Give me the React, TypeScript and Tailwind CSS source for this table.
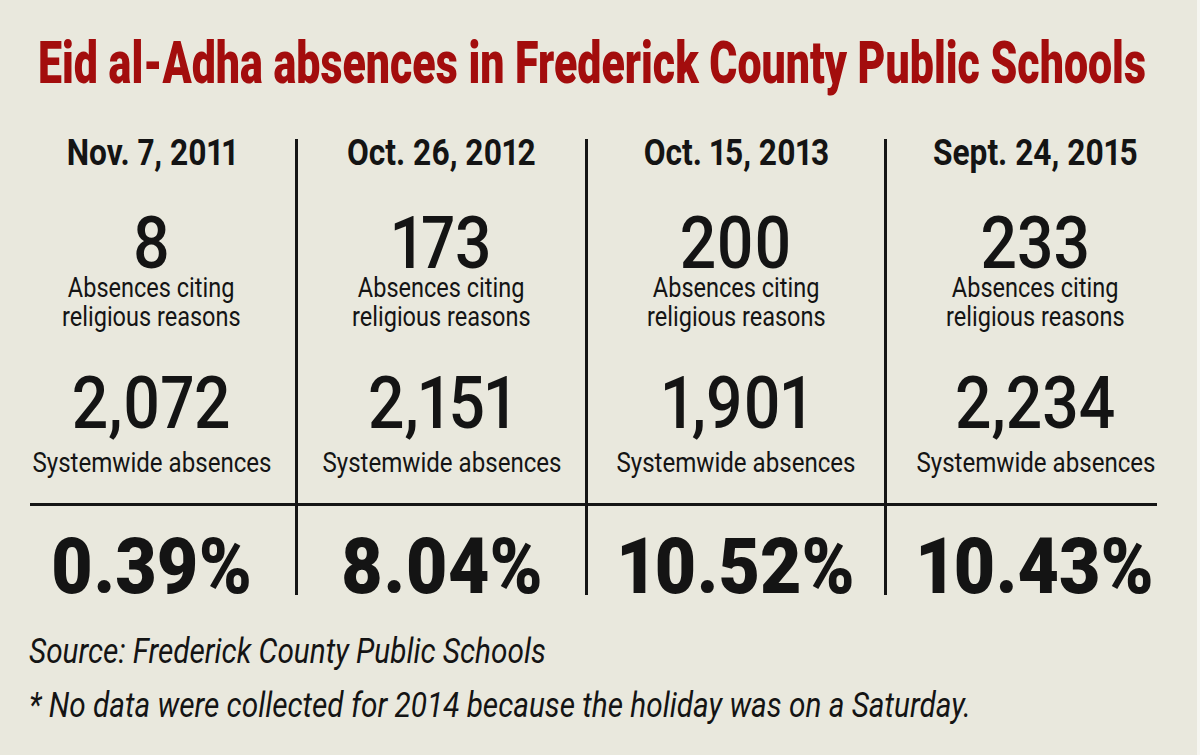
import clsx from "clsx";
import type { ReactNode } from "react";

const columns = [
  { date: "Nov. 7, 2011", religious: "8", total: "2,072", pct: "0.39%" },
  { date: "Oct. 26, 2012", religious: "173", total: "2,151", pct: "8.04%" },
  { date: "Oct. 15, 2013", religious: "200", total: "1,901", pct: "10.52%" },
  { date: "Sept. 24, 2015", religious: "233", total: "2,234", pct: "10.43%" },
];

// the reference uses a condensed face, so squeeze a regular one horizontally
function Squeeze({ className, children }: { className?: string; children: ReactNode }) {
  return <span className={clsx("inline-block whitespace-nowrap", className)}>{children}</span>;
}

export default function App() {
  return (
    <div className="w-[1200px] h-[755px] overflow-hidden bg-[#e9e8dd] text-[#141414] font-['Roboto','Liberation_Sans',sans-serif] border-r-[3px] border-r-[#f6f6f1]">
      <h1 className="pt-[33px] pl-[38px] text-[60px] leading-[60px] font-black text-[#a30d0d]">
        <Squeeze className="origin-left scale-x-[0.715]">
          Eid al-Adha absences in Frederick County Public Schools
        </Squeeze>
      </h1>

      <div className="mt-[46px] ml-[8px] grid h-[455px] grid-cols-[287px_290px_299px_300px]">
        {columns.map((col, i) => (
          <div
            key={col.date}
            className={clsx(
              "flex flex-col items-center proportional-nums",
              i > 0 && "border-l-[3px] border-l-[#151515]"
            )}
          >
            <Squeeze className="mt-[1px] text-[36px] leading-[26px] font-bold scale-x-[0.88]">
              {col.date}
            </Squeeze>
            <Squeeze className="mt-[51px] text-[73px] leading-[52px] font-medium scale-x-[0.88]">
              {col.religious}
            </Squeeze>
            <div className="mt-[4px] flex flex-col items-center text-[28px] leading-[29px]">
              <Squeeze className="scale-x-[0.84]">Absences citing</Squeeze>
              <Squeeze className="scale-x-[0.84]">religious reasons</Squeeze>
            </div>
            <Squeeze className="mt-[46px] text-[73px] leading-[52px] font-medium scale-x-[0.88]">
              {col.total}
            </Squeeze>
            <Squeeze className="mt-[19px] text-[28px] leading-[29px] scale-x-[0.86]">
              Systemwide absences
            </Squeeze>
            <div
              className={clsx(
                "mt-[26px] h-[3px] self-stretch bg-[#151515]",
                i === 0 && "ml-[22px]",
                i === 3 && "mr-[27px]"
              )}
            />
            <Squeeze className="mt-[34px] text-[77px] leading-[55px] font-black scale-x-[0.93]">
              {col.pct}
            </Squeeze>
          </div>
        ))}
      </div>

      <div className="pl-[29px] text-[35px] leading-[35px] italic">
        <p className="mt-[40px]">
          <Squeeze className="origin-left scale-x-[0.85]">Source: Frederick County Public Schools</Squeeze>
        </p>
        <p className="mt-[19px]">
          <Squeeze className="origin-left scale-x-[0.85]">
            * No data were collected for 2014 because the holiday was on a Saturday.
          </Squeeze>
        </p>
      </div>
    </div>
  );
}
